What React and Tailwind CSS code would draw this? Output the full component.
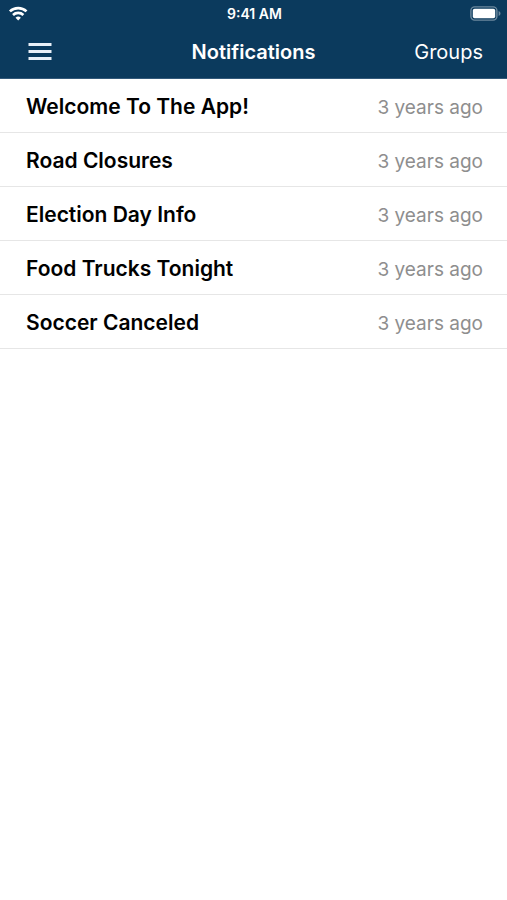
const notifications = [
  { id: 1, title: "Welcome To The App!", time: "3 years ago" },
  { id: 2, title: "Road Closures", time: "3 years ago" },
  { id: 3, title: "Election Day Info", time: "3 years ago" },
  { id: 4, title: "Food Trucks Tonight", time: "3 years ago" },
  { id: 5, title: "Soccer Canceled", time: "3 years ago" },
]

function WifiIcon() {
  return (
    <svg viewBox="0 0 20 15" className="h-[15px] w-5" fill="none" stroke="white" strokeWidth="2.7" aria-hidden="true">
      <path d="M1.9 5.4a12 12 0 0 1 16.6 0" />
      <path d="M5 8.9a7.6 7.6 0 0 1 10.4 0" />
      <path d="M10.2 14.4 7.5 11.7a3.9 3.9 0 0 1 5.4 0Z" fill="white" stroke="none" />
    </svg>
  )
}

function BatteryIcon() {
  return (
    <svg viewBox="0 0 31 15" className="h-[15px] w-[31px]" aria-hidden="true">
      <rect x="0.9" y="0.9" width="26" height="13.2" rx="3.8" fill="none" stroke="white" strokeOpacity="0.4" strokeWidth="1.4" />
      <rect x="2.8" y="2.8" width="22.4" height="9.4" rx="1.8" fill="white" />
      <path d="M28.6 5v5c1.1-.4 1.9-1.3 1.9-2.5S29.7 5.4 28.6 5Z" fill="white" fillOpacity="0.4" />
    </svg>
  )
}

export default function App() {
  return (
    <div className="min-h-screen bg-white font-['Inter',sans-serif]">
      <header className="border-b border-[#33597a] bg-[#0b3a5d] text-white">
        {/* Status bar */}
        <div className="grid h-7 grid-cols-3 items-center pr-1.5 pb-[2px] pl-2">
          <WifiIcon />
          <span className="text-center text-[14px] font-semibold">9:41 AM</span>
          <div className="flex justify-end">
            <BatteryIcon />
          </div>
        </div>

        {/* Navigation bar */}
        <div className="grid h-[50px] grid-cols-3 items-center px-6 pb-[3px]">
          <button type="button" aria-label="Open menu" className="justify-self-start p-1">
            <svg viewBox="0 0 24 17" className="h-[17px] w-6" fill="#e9f0f8" aria-hidden="true">
              <path d="M.5 0h23v3H.5zM.5 7h23v3H.5zM.5 14h23v3H.5z" />
            </svg>
          </button>
          <h1 className="text-center text-[20px] font-semibold">Notifications</h1>
          <button type="button" className="justify-self-end text-[20px]">Groups</button>
        </div>
      </header>

      <ul>
        {notifications.map((item) => (
          <li key={item.id} className="flex items-baseline justify-between border-b border-[#e6e6e6] pt-3 pr-6 pb-2 pl-[26px]">
            <span className="text-[21px] leading-8 font-semibold text-black">{item.title}</span>
            <time className="text-[19px] leading-8 text-[#8e8e8e]">{item.time}</time>
          </li>
        ))}
      </ul>
    </div>
  )
}
